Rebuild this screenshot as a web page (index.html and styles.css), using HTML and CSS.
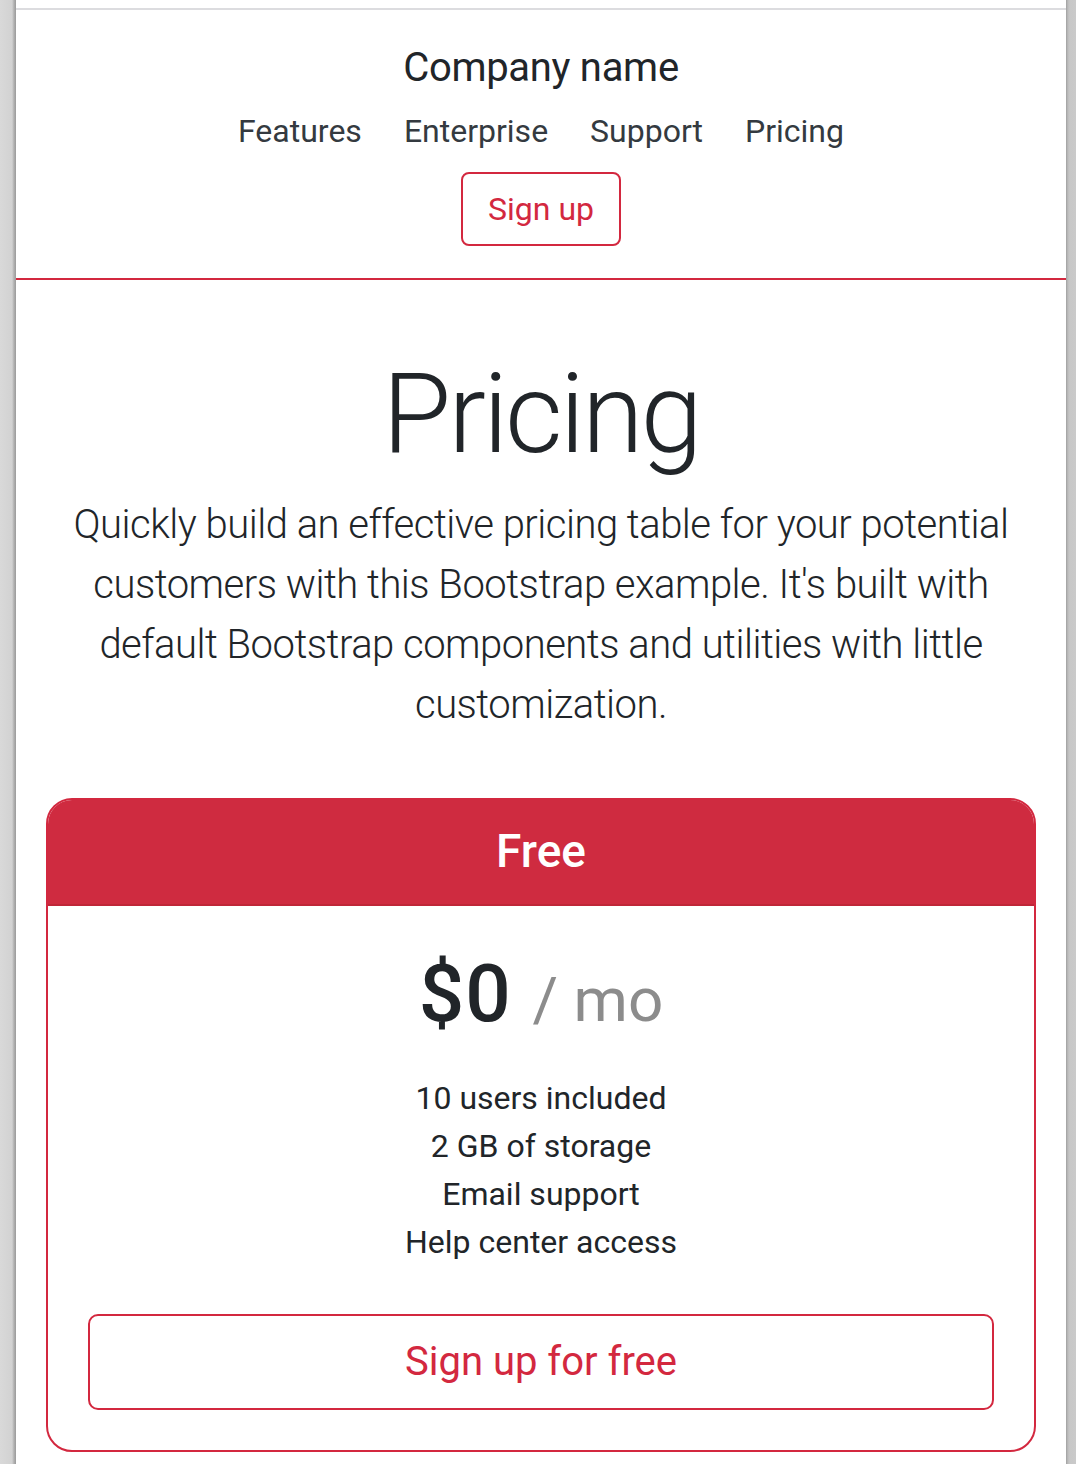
FILE: index.html
```html
<!DOCTYPE html>
<html lang="en">
<head>
<meta charset="utf-8">
<title>Pricing example</title>
<link rel="stylesheet" href="styles.css">
</head>
<body>
<div class="frame">
  <div class="side side-left"></div>
  <div class="page">
    <header class="site-header">
      <h5 class="brand">Company name</h5>
      <nav class="nav">
        <a href="#">Features</a>
        <a href="#">Enterprise</a>
        <a href="#">Support</a>
        <a href="#">Pricing</a>
      </nav>
      <a class="btn-outline" href="#">Sign up</a>
    </header>

    <section class="pricing-header">
      <h1 class="display">Pricing</h1>
      <p class="lead">Quickly build an effective pricing table for your potential customers with this Bootstrap example. It's built with default Bootstrap components and utilities with little customization.</p>
    </section>

    <div class="deck">
      <div class="card">
        <div class="card-header">
          <h4 class="plan">Free</h4>
        </div>
        <div class="card-body">
          <h1 class="price">$0 <small class="per">/ mo</small></h1>
          <ul class="features">
            <li>10 users included</li>
            <li>2 GB of storage</li>
            <li>Email support</li>
            <li>Help center access</li>
          </ul>
          <a class="btn-block" href="#">Sign up for free</a>
        </div>
      </div>
    </div>
  </div>
  <div class="side side-right"></div>
</div>
</body>
</html>
```
FILE: styles.css
```css
* { box-sizing: border-box; }
html, body { margin: 0; padding: 0; height: 100%; }
body {
  font-family: Roboto, Inter, "Liberation Sans", sans-serif;
  color: #212529;
  background: #fff;
  overflow: hidden;
}
.frame {
  display: flex;
  height: 1464px;
}
.side-left {
  width: 16px;
  flex: none;
  background: linear-gradient(to right, #d9d9d9 0, #d2d2d2 12px, #b0b0b0 14px, #9a9a9a 16px);
}
.side-right {
  width: 10px;
  flex: none;
  background: linear-gradient(to right, #a0a0a0 0, #bdbdbd 2px, #c8c8c8 4px, #cacaca 10px);
}
.page {
  flex: 1;
  min-width: 0;
  padding-top: 8px;
  background: #fff;
}
.site-header {
  border-top: 2px solid #dcdcdf;
  border-bottom: 2px solid #d3283f;
  padding: 34px 32px 32px;
  display: flex;
  flex-direction: column;
  align-items: center;
}
.brand {
  margin: 0;
  font-size: 40px;
  line-height: 48px;
  font-weight: 400;
  color: #212529;
  letter-spacing: -0.3px;
}
.nav {
  display: flex;
  margin-top: 15px;
  margin-left: 0;
}
.nav a {
  font-size: 32px;
  line-height: 48px;
  color: #343a40;
  text-decoration: none;
  padding: 0 21px;
}
.btn-outline {
  margin-top: 17px;
  display: inline-block;
  font-size: 32px;
  line-height: 48px;
  padding: 11px 25px;
  border: 2px solid #d3283f;
  border-radius: 8px;
  color: #d3283f;
  text-decoration: none;
}
.pricing-header {
  padding: 67px 32px 0;
  text-align: center;
}
.display {
  margin: 0 0 14px;
  font-size: 112px;
  line-height: 134px;
  font-weight: 300;
  letter-spacing: -3px;
  color: #212529;
}
.lead {
  margin: 0 auto;
  font-size: 40px;
  line-height: 60px;
  font-weight: 300;
  letter-spacing: -0.5px;
  color: #212529;
  max-width: 986px;
}
.deck {
  padding: 63px 30px 0 30px;
}
.card {
  border: 2px solid #d3283f;
  border-radius: 26px;
  overflow: hidden;
  text-align: center;
}
.card-header {
  background: #cf2b40;
  border-bottom: 2px solid #bf2638;
  padding: 22px 40px 24px;
}
.plan {
  margin: 0;
  font-size: 46px;
  line-height: 58px;
  font-weight: 500;
  color: #fff;
}
.card-body {
  padding: 40px 40px 40px;
}
.price {
  margin: 0;
  font-size: 80px;
  line-height: 96px;
  font-weight: 500;
  letter-spacing: 1px;
  color: #212529;
}
.per {
  font-size: 62px;
  line-height: 1;
  font-weight: 400;
  letter-spacing: 0;
  color: #8c8c8c;
}
.features {
  list-style: none;
  margin: 32px 0 48px;
  padding: 0;
}
.features li {
  font-size: 32px;
  line-height: 48px;
  color: #212529;
}
.btn-block {
  display: block;
  font-size: 40px;
  line-height: 60px;
  padding: 16px;
  border: 2px solid #d3283f;
  border-radius: 10px;
  color: #d3283f;
  text-decoration: none;
}
```
